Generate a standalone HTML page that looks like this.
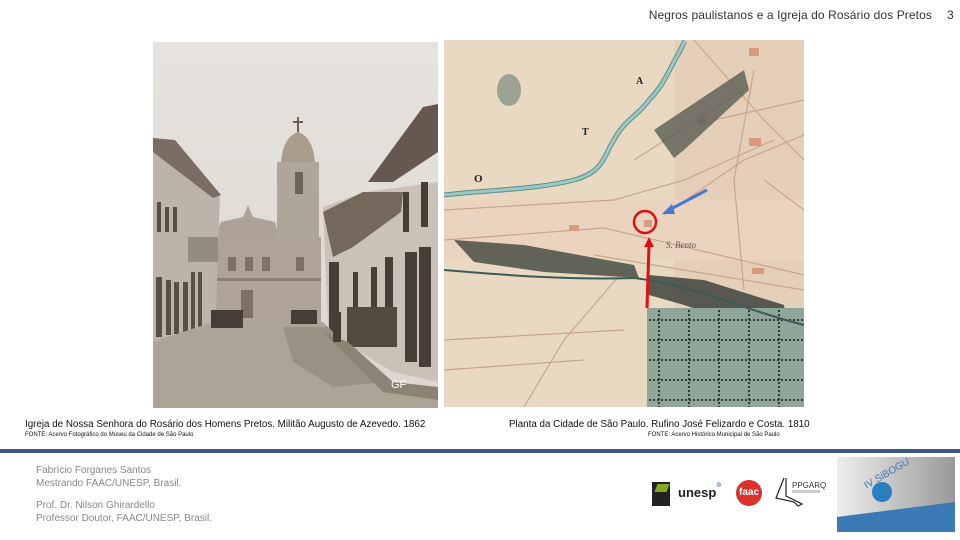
<!DOCTYPE html>
<html><head><meta charset="utf-8"><style>
body{margin:0;width:960px;height:540px;background:#fff;position:relative;overflow:hidden;font-family:"Liberation Sans",sans-serif}
.a{position:absolute}
</style></head><body>
<div class="a" style="right:28px;top:8px;font-size:12px;color:#333;letter-spacing:0.1px">Negros paulistanos e a Igreja do Rosário dos Pretos</div>
<div class="a" style="left:947px;top:8px;font-size:12px;color:#333">3</div>

<svg class="a" style="left:153px;top:42px" width="285" height="366" viewBox="0 0 285 366">
<defs><linearGradient id="sk" x1="0" y1="0" x2="0" y2="1"><stop offset="0" stop-color="#e6e3de"/><stop offset="1" stop-color="#dcd6ce"/></linearGradient></defs>
<rect width="285" height="366" fill="url(#sk)"/>
<rect x="60" y="195" width="108" height="85" fill="#aea396"/>
<polygon points="62,196 68,180 90,175 95,163 100,175 122,180 126,196" fill="#ada295"/>
<rect x="124" y="120" width="42" height="78" fill="#b0a599"/>
<path d="M128 120 Q130 95 145 90 Q160 95 162 120Z" fill="#a99d90"/>
<rect x="144" y="75" width="2" height="15" fill="#6b5e52"/><rect x="140" y="79" width="10" height="2" fill="#6b5e52"/>
<rect x="142" y="130" width="8" height="22" fill="#6e6258"/>
<rect x="60" y="236" width="108" height="3" fill="#8a7f73"/>
<g fill="#7d7165"><rect x="75" y="215" width="8" height="14"/><rect x="92" y="215" width="8" height="14"/><rect x="109" y="215" width="8" height="14"/><rect x="143" y="215" width="8" height="14"/><rect x="88" y="248" width="12" height="28"/></g>
<polygon points="0,100 20,100 67,155 62,300 0,305" fill="#bdb3a8"/>
<polygon points="0,96 22,98 68,153 60,156 0,110" fill="#7a6e63"/>
<g fill="#5a4f45"><rect x="3" y="235" width="6" height="60"/><rect x="13" y="238" width="5" height="55"/><rect x="21" y="240" width="5" height="52"/><rect x="30" y="240" width="5" height="50"/><rect x="38" y="230" width="4" height="60"/><rect x="45" y="230" width="4" height="55"/><rect x="4" y="160" width="4" height="30"/><rect x="12" y="165" width="4" height="25"/><rect x="20" y="165" width="4" height="25"/></g>
<rect x="35" y="195" width="30" height="25" fill="#968b80"/>
<polygon points="170,165 212,150 250,145 285,140 285,340 240,330 190,300 175,285" fill="#cbc2b7"/>
<polygon points="215,140 270,65 285,62 285,110 240,140" fill="#65594f"/>
<polygon points="170,170 210,150 250,150 248,170 200,205 180,215" fill="#74685d"/>
<g fill="#483e36"><rect x="250" y="150" width="6" height="40"/><rect x="268" y="140" width="7" height="45"/><rect x="252" y="210" width="12" height="110"/><rect x="266" y="205" width="12" height="120"/><rect x="232" y="215" width="8" height="85"/><rect x="218" y="225" width="6" height="60"/><rect x="200" y="230" width="5" height="50"/><rect x="176" y="220" width="10" height="80"/></g>
<rect x="194" y="265" width="50" height="40" fill="#54493f"/>
<polygon points="0,300 60,280 170,280 190,300 240,345 285,355 285,366 0,366" fill="#ada396"/>
<polygon points="130,285 175,285 230,340 180,345 140,320" fill="#9b9084"/>
<polygon points="170,290 195,300 240,340 285,345 285,358 230,350" fill="#8d8276"/>
<g fill="#473d35"><rect x="58" y="268" width="32" height="18"/><rect x="138" y="268" width="26" height="14"/><rect x="180" y="270" width="8" height="30"/></g>
<text x="238" y="346" font-size="11" fill="#fff" font-family="Liberation Sans">GF</text>
</svg>

<svg class="a" style="left:444px;top:40px" width="360" height="367" viewBox="0 0 360 367">
<rect width="360" height="367" fill="#e9d9c2"/>
<rect x="230" y="0" width="130" height="367" fill="#e6cfb8"/>
<rect x="0" y="160" width="360" height="60" fill="#ebd4bf"/>
<g stroke="#c8a58e" stroke-width="1.2" fill="none">
<path d="M0 170 L170 160 L240 140 L330 100 M0 200 L160 188 L360 235 M150 215 L360 250 M190 120 L300 50 M220 175 L300 120 L360 95 M250 0 L320 80 L360 120 M310 30 L290 140 L300 250 M180 230 L120 300 L80 367 M0 300 L180 290 M270 80 L360 60 M0 330 L140 320 M320 140 L360 170"/>
</g>
<g fill="#d9997e"><rect x="125" y="185" width="10" height="6"/><rect x="254" y="78" width="8" height="6"/><rect x="305" y="98" width="12" height="8"/><rect x="308" y="228" width="12" height="6"/><rect x="200" y="180" width="8" height="7"/><rect x="305" y="8" width="10" height="8"/></g>
<path d="M0 155 C40 150 90 150 130 140 C160 132 160 115 170 100 C180 80 195 75 205 60 C220 45 225 30 232 18 C240 5 240 0 242 0" stroke="#5d8e8c" stroke-width="5" fill="none"/>
<path d="M0 155 C40 150 90 150 130 140 C160 132 160 115 170 100 C180 80 195 75 205 60 C220 45 225 30 232 18 C240 5 240 0 242 0" stroke="#9cc7c2" stroke-width="3" fill="none"/>
<path d="M10 200 L80 205 L190 225 L195 238 L100 232 L30 222 Z" fill="#4a4d45" opacity="0.85"/>
<path d="M205 235 L260 240 L340 265 L345 295 L300 285 L240 265 L205 255 Z" fill="#3f433d" opacity="0.85"/>
<path d="M210 90 L300 30 L305 50 L240 110 L230 118 Z" fill="#5a5d55" opacity="0.8"/>
<rect x="203" y="268" width="157" height="99" fill="#8fa598"/>
<g stroke="#2f3a33" stroke-width="2" stroke-dasharray="2 2"><path d="M205 280 H360 M205 300 H360 M205 320 H360 M205 340 H360 M205 360 H360 M215 270 V367 M245 270 V367 M275 270 V367 M305 270 V367 M335 270 V367"/></g>
<path d="M0 230 C60 235 120 240 190 238 C250 245 300 270 360 285" stroke="#3a5a5a" stroke-width="2" fill="none"/>
<ellipse cx="65" cy="50" rx="12" ry="16" fill="#7b8a80" opacity="0.7"/>
<text x="30" y="142" font-size="11" font-family="Liberation Serif" font-weight="bold" fill="#222">O</text>
<text x="138" y="95" font-size="10" font-family="Liberation Serif" font-weight="bold" fill="#222">T</text>
<text x="192" y="44" font-size="10" font-family="Liberation Serif" font-weight="bold" fill="#222">A</text>
<text x="222" y="208" font-size="9" font-style="italic" fill="#555" font-family="Liberation Serif">S. Bento</text>
<line x1="203" y1="268" x2="205" y2="205" stroke="#e01010" stroke-width="3"/>
<polygon points="200,207 210,207 205,197" fill="#e01010"/>
<circle cx="201" cy="182" r="11" stroke="#e01010" stroke-width="2.5" fill="none"/>
<line x1="263" y1="150" x2="225" y2="170" stroke="#4a78d0" stroke-width="3"/>
<polygon points="218,174 228,164 231,174" fill="#4a78d0"/>
</svg>

<div class="a" style="left:25px;top:419px;font-size:9.8px;color:#111">Igreja de Nossa Senhora do Rosário dos Homens Pretos. Militão Augusto de Azevedo. 1862</div>
<div class="a" style="left:25px;top:432px;font-size:6px;color:#111">FONTE: Acervo Fotográfico do Museu da Cidade de São Paulo</div>
<div class="a" style="left:509px;top:419px;font-size:9.8px;color:#111">Planta da Cidade de São Paulo. Rufino José Felizardo e Costa. 1810</div>
<div class="a" style="left:648px;top:432px;font-size:6px;color:#111">FONTE: Acervo Histórico Municipal de São Paulo</div>

<div class="a" style="left:0;top:449px;width:960px;height:4px;background:#3c5a80"></div>

<div class="a" style="left:36px;top:464px;font-size:10px;color:#888;line-height:13px">Fabrício Forganes Santos<br>Mestrando FAAC/UNESP, Brasil.</div>
<div class="a" style="left:36px;top:499px;font-size:10px;color:#888;line-height:13px">Prof. Dr. Nilson Ghirardello<br>Professor Doutor, FAAC/UNESP, Brasil.</div>

<div class="a" style="left:652px;top:482px;width:18px;height:24px;background:#222"></div>
<div class="a" style="left:656px;top:484px;width:12px;height:8px;background:#8a2;transform:skew(-20deg)"></div>
<div class="a" style="left:678px;top:485px;font-size:13px;font-weight:bold;color:#222">unesp</div>
<div class="a" style="left:716px;top:481px;font-size:7px;color:#3a7ac0">✲</div>
<div class="a" style="left:736px;top:480px;width:26px;height:26px;border-radius:50%;background:#d8322a;color:#fff;font-size:10px;font-weight:bold;text-align:center;line-height:26px">faac</div>
<svg class="a" style="left:772px;top:476px" width="56" height="34"><path d="M12 2 L4 22 L22 26 L26 30 L30 28 L14 20 L14 2" stroke="#222" fill="none" stroke-width="1.2"/><text x="20" y="12" font-size="8" fill="#333" font-family="Liberation Sans">PPGARQ</text><rect x="20" y="14" width="28" height="3" fill="#ccc"/></svg>
<svg class="a" style="left:837px;top:457px" width="118" height="75"><defs><linearGradient id="g" x1="0" x2="1"><stop offset="0" stop-color="#eee"/><stop offset="1" stop-color="#999"/></linearGradient></defs><rect width="118" height="75" fill="url(#g)"/><circle cx="45" cy="35" r="10" fill="#2a7fc0"/><path d="M0 60 L118 45 L118 75 L0 75Z" fill="#3c7ab5"/><text x="25" y="25" font-size="10" fill="#3c7ab5" transform="rotate(-30 40 20)">IV SiBOGU</text></svg>
</body></html>
